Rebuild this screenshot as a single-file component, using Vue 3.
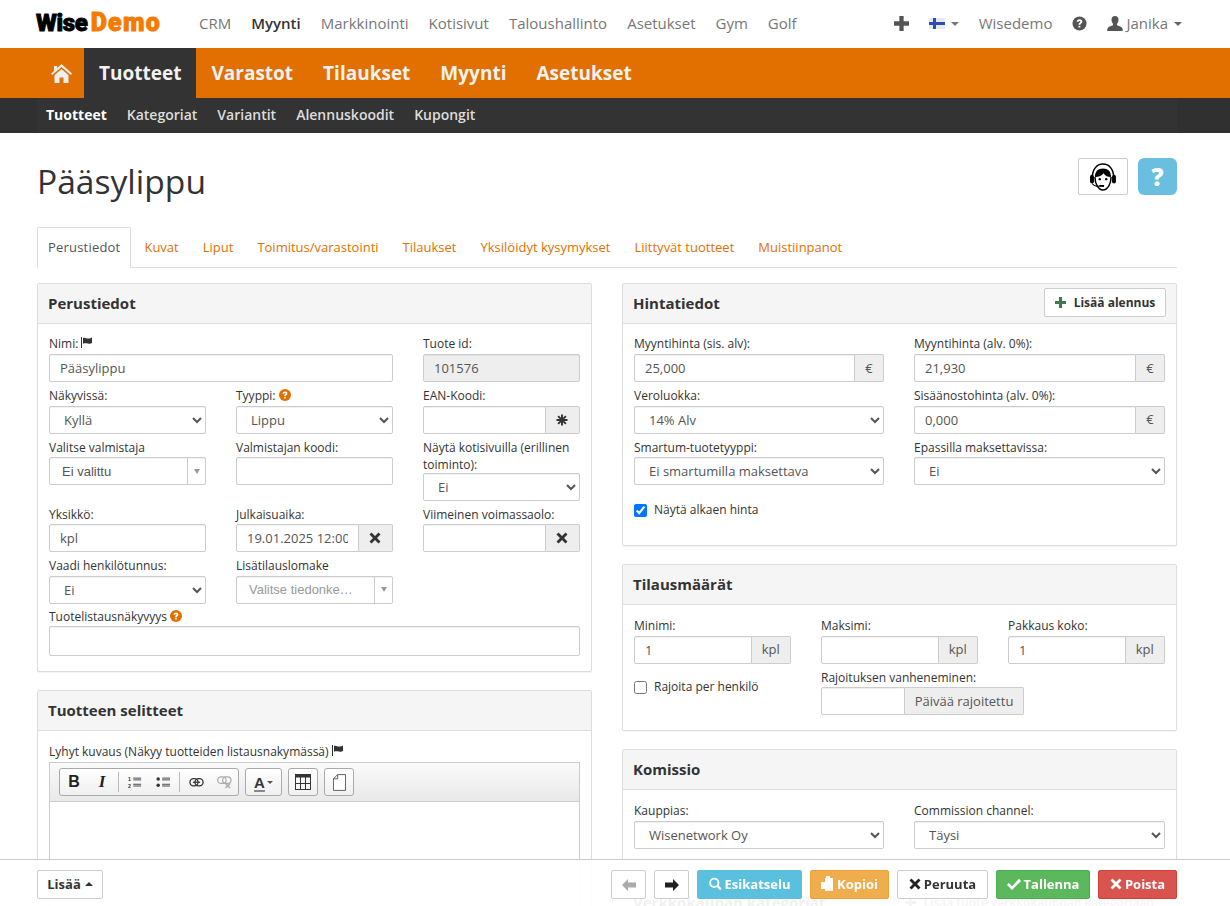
<script setup>
const topLinks = ['CRM', 'Myynti', 'Markkinointi', 'Kotisivut', 'Taloushallinto', 'Asetukset', 'Gym', 'Golf']
const mainLinks = ['Varastot', 'Tilaukset', 'Myynti', 'Asetukset']
const subLinks = ['Tuotteet', 'Kategoriat', 'Variantit', 'Alennuskoodit', 'Kupongit']
const tabs = ['Perustiedot', 'Kuvat', 'Liput', 'Toimitus/varastointi', 'Tilaukset', 'Yksilöidyt kysymykset', 'Liittyvät tuotteet', 'Muistiinpanot']
</script>

<template>
  <div class="page">
    <header class="topbar">
      <div class="logo"><span class="logo-a">Wise</span><span class="logo-b">Demo</span></div>
      <nav class="toplinks">
        <a v-for="l in topLinks" :key="l" :class="{ on: l === 'Myynti' }">{{ l }}</a>
      </nav>
      <div class="topright">
        <svg class="tplus" viewBox="0 0 14 14"><path d="M5 0h4v5h5v4H9v5H5V9H0V5h5z" fill="#555"/></svg>
        <span class="flagwrap">
          <svg class="flag" viewBox="0 0 16 11"><rect width="16" height="11" fill="#e6e9f4"/><rect x="4" width="3" height="11" fill="#2a4fae"/><rect y="4" width="16" height="3" fill="#2a4fae"/></svg>
          <i class="caret gray"></i>
        </span>
        <span class="wisedemo">Wisedemo</span>
        <svg class="tq" viewBox="0 0 16 16"><circle cx="8" cy="8" r="7.5" fill="#555"/><path d="M5 6.200C5 4.400 6.300 3.400 8.100 3.400c1.800 0 3 1 3 2.500 0 1.200-.7 1.800-1.500 2.300-.6.400-.7.600-.7 1.200H6.900c0-1.200.3-1.800 1.100-2.300.6-.4.9-.6.9-1.100 0-.5-.4-.8-.9-.8-.6 0-1 .4-1 1zM6.900 10.300h2v2h-2z" fill="#fff"/></svg>
        <span class="user">
          <svg class="tuser" viewBox="0 0 16 16"><path d="M8 0c2.300 0 3.500 1.700 3.500 3.800 0 1.500-.6 3-1.500 4v1.400c1.700.7 5 1.500 5.500 3.300.2.800.3 2 .3 2.500H.2c0-.5.1-1.700.3-2.500C1 10.700 4.300 9.900 6 9.200V7.800c-.9-1-1.500-2.500-1.500-4C4.500 1.700 5.700 0 8 0z" fill="#555"/></svg>
          <span>Janika</span>
          <i class="caret"></i>
        </span>
      </div>
    </header>

    <div class="mainbar">
      <a class="home">
        <svg viewBox="0 0 21 19"><path d="M10.500 0 21 9.600 19.800 11 10.500 3 1.200 11 0 9.600 3 6.900V2h3v2.200zM3.500 11.200 10.500 5l7 6.200V19H12.500v-5.500h-4V19h-5z" fill="#eee"/></svg>
      </a>
      <a class="active">Tuotteet</a>
      <a v-for="l in mainLinks" :key="l">{{ l }}</a>
    </div>
    <div class="subbar">
      <div class="subinner">
        <a v-for="(l, i) in subLinks" :key="l" :class="{ on: i === 0 }">{{ l }}</a>
      </div>
    </div>

    <main class="content">
      <div class="titlerow">
        <h1>Pääsylippu</h1>
        <div class="helpers">
          <button class="hbtn">
            <svg viewBox="2 2 26 26" width="28" height="28">
              <path d="M5 16C5 8 9 3 15 3s10 5 10 13" fill="none" stroke="#000" stroke-width="1.400"/>
              <rect x="3" y="13" width="3.600" height="8" rx="1.800" fill="#000"/>
              <rect x="23.400" y="13" width="3.600" height="8" rx="1.800" fill="#000"/>
              <path d="M7.500 15c0-5.500 3-8 7.500-8s7.500 2.500 7.500 8c-3 0-5.500-1-7-3.500-1.200 2-4 3.500-8 3.500z" fill="#000"/>
              <path d="M7.500 15c0 6.500 3.300 12 7.500 12s7.500-5.500 7.500-12" fill="none" stroke="#000" stroke-width="1.400"/>
              <circle cx="12" cy="17" r="1.100" fill="#000"/><circle cx="18" cy="17" r="1.100" fill="#000"/>
              <path d="M5 21c1 1.800 3.500 2.600 6.500 2.600" fill="none" stroke="#000" stroke-width="1"/>
              <path d="M11.500 22.400h4.500v1.800h-4.500z" fill="#000"/>
            </svg>
          </button>
          <button class="qbtn">?</button>
        </div>
      </div>

      <ul class="tabs">
        <li v-for="(t, i) in tabs" :key="t" :class="{ on: i === 0 }">{{ t }}</li>
      </ul>

      <div class="columns">
        <div class="col">
          <section class="panel">
            <h2 class="phead">Perustiedot</h2>
            <div class="pbody first">
              <div class="g3">
                <div class="f span2">
                  <label>Nimi: <svg class="flagi" viewBox="0 0 12 11"><path d="M0 0h1v11H0zM2 1c2-1 3 .5 5 .5S10 1 11 .5V6c-1 .8-2.500 1-4 .6S3.500 6 2 6.800z" fill="#333"/></svg></label>
                  <input value="Pääsylippu" />
                </div>
                <div class="f">
                  <label>Tuote id:</label>
                  <input value="101576" disabled class="dis" />
                </div>
                <div class="f">
                  <label>Näkyvissä:</label>
                  <select><option>Kyllä</option></select>
                </div>
                <div class="f">
                  <label>Tyyppi: <svg class="qi" viewBox="0 0 16 16"><circle cx="8" cy="8" r="8" fill="#e17000"/><path d="M4.800 6.200C4.800 4.300 6.200 3.300 8.100 3.300c1.900 0 3.100 1 3.100 2.600 0 1.200-.7 1.800-1.500 2.300-.6.400-.7.600-.7 1.200H6.900c0-1.200.3-1.800 1.100-2.300.6-.4.9-.6.9-1.100 0-.5-.4-.8-.9-.8-.6 0-1 .4-1 1zM6.900 10.300h2.100v2.200H6.900z" fill="#fff"/></svg></label>
                  <select><option>Lippu</option></select>
                </div>
                <div class="f">
                  <label>EAN-Koodi:</label>
                  <div class="ig"><input /><span class="addon w35"><svg class="ast" viewBox="0 0 12 12"><path d="M6 .5v11M.5 6h11M2.100 2.100l7.800 7.800M9.900 2.100l-7.800 7.800" stroke="#333" stroke-width="1.900"/></svg></span></div>
                </div>
                <div class="f">
                  <label>Valitse valmistaja</label>
                  <div class="combo"><span class="ctext">Ei valittu</span><span class="cbtn"><i></i></span></div>
                </div>
                <div class="f">
                  <label>Valmistajan koodi:</label>
                  <input />
                </div>
                <div class="f">
                  <label class="two">Näytä kotisivuilla (erillinen toiminto):</label>
                  <select><option>Ei</option></select>
                </div>
                <div class="f">
                  <label>Yksikkö:</label>
                  <input value="kpl" />
                </div>
                <div class="f">
                  <label>Julkaisuaika:</label>
                  <div class="ig"><input value="19.01.2025 12:00" /><span class="addon w35"><svg class="xi" viewBox="0 0 12 12"><path d="M2.500.5 6 4 9.500.5l2 2L8 6l3.500 3.500-2 2L6 8l-3.500 3.500-2-2L4 6 .5 2.500z" fill="#333"/></svg></span></div>
                </div>
                <div class="f">
                  <label>Viimeinen voimassaolo:</label>
                  <div class="ig"><input /><span class="addon w35"><svg class="xi" viewBox="0 0 12 12"><path d="M2.500.5 6 4 9.500.5l2 2L8 6l3.500 3.500-2 2L6 8l-3.500 3.500-2-2L4 6 .5 2.500z" fill="#333"/></svg></span></div>
                </div>
                <div class="f">
                  <label>Vaadi henkilötunnus:</label>
                  <select><option>Ei</option></select>
                </div>
                <div class="f">
                  <label>Lisätilauslomake</label>
                  <div class="combo muted"><span class="ctext">Valitse tiedonke…</span><span class="cbtn"><i></i></span></div>
                </div>
              </div>
              <div class="f last">
                <label>Tuotelistausnäkyvyys <svg class="qi" viewBox="0 0 16 16"><circle cx="8" cy="8" r="8" fill="#e17000"/><path d="M4.800 6.200C4.800 4.300 6.200 3.300 8.100 3.300c1.900 0 3.100 1 3.100 2.600 0 1.200-.7 1.800-1.500 2.300-.6.400-.7.600-.7 1.200H6.900c0-1.200.3-1.800 1.100-2.300.6-.4.9-.6.9-1.100 0-.5-.4-.8-.9-.8-.6 0-1 .4-1 1zM6.900 10.300h2.100v2.200H6.900z" fill="#fff"/></svg></label>
                <div class="area"></div>
              </div>
            </div>
          </section>

          <section class="panel">
            <h2 class="phead">Tuotteen selitteet</h2>
            <div class="pbody">
              <label class="lbl">Lyhyt kuvaus (Näkyy tuotteiden listausnakymässä) <svg class="flagi" viewBox="0 0 12 11"><path d="M0 0h1v11H0zM2 1c2-1 3 .5 5 .5S10 1 11 .5V6c-1 .8-2.500 1-4 .6S3.500 6 2 6.800z" fill="#333"/></svg></label>
              <div class="editor">
                <div class="toolbar">
                  <div class="tg g1">
                    <span class="tb b">B</span><span class="tb it">I</span><span class="sep"></span>
                    <span class="tb"><svg viewBox="0 0 16 14" width="14" height="13"><path d="M6 2h9M6 11h9M6 4h9M6 9h9" stroke="#333" stroke-width="1"/><text x="0" y="5.500" font-size="6" font-weight="700" fill="#333" font-family="Liberation Sans">1</text><text x="0" y="13" font-size="6" font-weight="700" fill="#333" font-family="Liberation Sans">2</text></svg></span>
                    <span class="tb"><svg viewBox="0 0 16 14" width="14" height="13"><circle cx="2.500" cy="3" r="2" fill="#333"/><circle cx="2.500" cy="10" r="2" fill="#333"/><path d="M7 2h9M7 4h9M7 9h9M7 11h9" stroke="#333"/></svg></span>
                    <span class="sep"></span>
                    <span class="tb"><svg viewBox="0 0 16 10" width="15" height="9"><rect x=".7" y=".7" width="9" height="8" rx="4" fill="none" stroke="#333" stroke-width="1.400"/><rect x="6.300" y=".7" width="9" height="8" rx="4" fill="none" stroke="#333" stroke-width="1.400"/><path d="M4 4.700h8" stroke="#333" stroke-width="1.400"/></svg></span>
                    <span class="tb"><svg viewBox="0 0 16 14" width="15" height="13"><rect x=".7" y="1" width="9" height="7" rx="3.500" fill="none" stroke="#aaa" stroke-width="1.300"/><rect x="6" y="1" width="9" height="7" rx="3.500" fill="none" stroke="#aaa" stroke-width="1.300"/><path d="M9 8l5 5M14 8l-5 5" stroke="#aaa" stroke-width="1.500"/></svg></span>
                  </div>
                  <div class="tg g2"><span class="letter">A</span><i class="caret small"></i></div>
                  <div class="tg g3b"><svg viewBox="0 0 16 16" width="16" height="16"><rect x=".5" y=".5" width="15" height="15" fill="none" stroke="#333"/><rect width="16" height="3.500" fill="#333"/><path d="M5.500 3v13M10.500 3v13M0 9.500h16" stroke="#333"/></svg></div>
                  <div class="tg g3b"><svg viewBox="0 0 14 18" width="13" height="17"><path d="M5 .5h8.500v17H.5V5z" fill="#fff" stroke="#555"/><path d="M5 .5V5H.5" fill="none" stroke="#555"/></svg></div>
                </div>
                <div class="edit-area"></div>
              </div>
            </div>
          </section>
        </div>

        <div class="col">
          <section class="panel">
            <div class="phead flexhead">
              <h2>Hintatiedot</h2>
              <button class="addbtn"><svg viewBox="0 0 12 12" width="11" height="11"><path d="M4.300 0h3.400v4.300H12v3.400H7.700V12H4.300V7.700H0V4.300h4.300z" fill="#3f7a4a"/></svg>Lisää alennus</button>
            </div>
            <div class="pbody first nopad">
              <div class="g2col">
                <div class="f"><label>Myyntihinta (sis. alv):</label><div class="ig"><input value="25,000" /><span class="addon w29">€</span></div></div>
                <div class="f"><label>Myyntihinta (alv. 0%):</label><div class="ig"><input value="21,930" /><span class="addon w29">€</span></div></div>
                <div class="f"><label>Veroluokka:</label><select><option>14% Alv</option></select></div>
                <div class="f"><label>Sisäänostohinta (alv. 0%):</label><div class="ig"><input value="0,000" /><span class="addon w29">€</span></div></div>
                <div class="f"><label>Smartum-tuotetyyppi:</label><select><option>Ei smartumilla maksettava</option></select></div>
                <div class="f"><label>Epassilla maksettavissa:</label><select><option>Ei</option></select></div>
              </div>
              <label class="check c1"><input type="checkbox" checked /><span>Näytä alkaen hinta</span></label>
            </div>
          </section>

          <section class="panel">
            <h2 class="phead">Tilausmäärät</h2>
            <div class="pbody h2body">
              <div class="g3">
                <div class="f"><label>Minimi:</label><div class="ig"><input value="1" /><span class="addon w39">kpl</span></div></div>
                <div class="f"><label>Maksimi:</label><div class="ig"><input /><span class="addon w39">kpl</span></div></div>
                <div class="f"><label>Pakkaus koko:</label><div class="ig"><input value="1" /><span class="addon w39">kpl</span></div></div>
                <label class="check c2"><input type="checkbox" /><span>Rajoita per henkilö</span></label>
                <div class="f wide">
                  <label>Rajoituksen vanheneminen:</label>
                  <div class="ig shortig"><input /><span class="addon rajoitettu">Päivää rajoitettu</span></div>
                </div>
              </div>
            </div>
          </section>

          <section class="panel">
            <h2 class="phead">Komissio</h2>
            <div class="pbody kbody">
              <div class="g2col">
                <div class="f"><label>Kauppias:</label><select><option>Wisenetwork Oy</option></select></div>
                <div class="f"><label>Commission channel:</label><select><option>Täysi</option></select></div>
              </div>
            </div>
          </section>

          <section class="panel cats">
            <div class="phead flexhead nob">
              <h2>Verkkokaupan kategoriat</h2>
              <span class="catadd"><svg viewBox="0 0 12 12" width="11" height="11"><path d="M4.300 0h3.400v4.300H12v3.400H7.700V12H4.300V7.700H0V4.300h4.300z" fill="#3f7a4a"/></svg>Lisää tuote verkkokauppan kategoriaan</span>
            </div>
          </section>
        </div>
      </div>
    </main>

    <footer class="footer">
      <button class="fb lisaa">Lisää <i class="caret up"></i></button>
      <div class="factions">
        <button class="fb ar dim"><svg viewBox="0 0 14 12" width="14" height="12"><path d="M6 0v3.500h8v5H6V12L0 6z" fill="#aaa"/></svg></button>
        <button class="fb ar"><svg viewBox="0 0 14 12" width="14" height="12"><path d="M8 0v3.500H0v5h8V12l6-6z" fill="#222"/></svg></button>
        <button class="fb info"><svg viewBox="0 0 14 14" width="13" height="14"><circle cx="5.700" cy="5.700" r="4.500" fill="none" stroke="#fff" stroke-width="2"/><path d="M8.800 8.800l4 4" stroke="#fff" stroke-width="2.500"/></svg>Esikatselu</button>
        <button class="fb warn"><svg viewBox="0 0 13 15" width="13" height="15"><path d="M5 0h4v2h3v13H4v-2H0V6h4V2h1z" fill="#fff"/></svg>Kopioi</button>
        <button class="fb"><svg viewBox="0 0 12 12" width="12" height="12"><path d="M2.500.5 6 4 9.500.5l2 2L8 6l3.500 3.500-2 2L6 8l-3.500 3.500-2-2L4 6 .5 2.500z" fill="#222"/></svg>Peruuta</button>
        <button class="fb ok"><svg viewBox="0 0 14 12" width="14" height="12"><path d="M1.800 5 5 8.200 12 .8 14 3 5 12 0 7z" fill="#fff"/></svg>Tallenna</button>
        <button class="fb danger"><svg viewBox="0 0 12 12" width="12" height="12"><path d="M2.500.5 6 4 9.500.5l2 2L8 6l3.500 3.500-2 2L6 8l-3.500 3.500-2-2L4 6 .5 2.500z" fill="#fff"/></svg>Poista</button>
      </div>
    </footer>
  </div>
</template>

<style>
html, body { margin: 0; overflow: hidden; }
</style>

<style scoped>
* { box-sizing: border-box; }
.page {
  height: 906px;
  overflow: hidden;
  position: relative;
  background: #fff;
  font-family: "Open Sans", sans-serif;
  font-size: 13px;
  line-height: 18.57px;
  color: #333;
}
.topbar { height: 48px; display: flex; align-items: center; padding: 0 48px 0 36px; }
.logo { width: 122px; margin-right: 41px; margin-top: -2px; font-family: "Roboto", sans-serif; font-weight: 900; font-size: 25px; line-height: 28px; white-space: nowrap; -webkit-text-stroke: .9px currentColor; }
.logo-a { color: #000; font-size: 24px; letter-spacing: -.3px; margin-right: 3px; }
.logo-b { color: #f47a00; letter-spacing: 1.300px; }
.toplinks { display: flex; gap: 20px; font-size: 15px; color: #777; margin-top: -1px; }
.toplinks .on { color: #333; font-weight: 600; }
.topright { margin-left: auto; margin-top: -1px; display: flex; align-items: center; font-size: 15px; color: #777; }
.tplus { width: 15px; height: 15px; margin-right: 20px; }
.flagwrap { display: flex; align-items: center; margin-right: 20px; }
.flag { width: 16px; height: 11px; margin-right: 6px; }
.wisedemo { margin-right: 20px; }
.tq { width: 15px; height: 15px; margin-right: 20px; }
.user { display: flex; align-items: center; }
.tuser { width: 16px; height: 16px; margin-right: 3px; }
.user .caret { margin-left: 6px; }
.caret { display: inline-block; width: 0; height: 0; border-left: 4px solid transparent; border-right: 4px solid transparent; border-top: 4px solid #666; }
.caret.gray { border-top-color: #777; }
.caret.up { border-top: 0; border-bottom: 4px solid #333; vertical-align: 2px; margin-left: 1px; }
.caret.small { border-left-width: 3px; border-right-width: 3px; border-top-width: 3px; border-top-color: #555; margin-left: 2px; }

.mainbar { height: 50px; background: #e17000; display: flex; align-items: stretch; padding-left: 51px; color: #f1f1f1; font-size: 19px; font-weight: 700; gap: 30px; }
.mainbar a { display: flex; align-items: center; }
.home { width: 21px; margin-right: -18px; }
.home svg { width: 21px; height: 19px; }
.mainbar .active { background: #333; padding: 0 15px; margin-right: -15px; }
.subbar { height: 35px; background: #303030; padding: 0 53px 0 37px; }
.subinner { height: 35px; background: #333; display: flex; align-items: center; gap: 20px; padding-left: 9px; color: #ddd; font-size: 14px; font-weight: 600; }
.subinner .on { color: #fff; font-weight: 700; }

.content { padding: 0 53px 0 37px; }
.titlerow { height: 94px; display: flex; justify-content: space-between; padding-top: 25px; }
h1 { margin: 0; font-size: 33.600px; line-height: 46px; font-weight: 400; color: #333; }
.helpers { display: flex; gap: 10px; }
.hbtn { width: 50px; height: 37px; background: #fff; border: 1px solid #ccc; border-radius: 2px; padding: 0; display: flex; align-items: center; justify-content: center; }
.qbtn { width: 39px; height: 37px; background: #6abfe0; border: 0; border-radius: 6px; color: #fff; font: 800 24px/37px "Open Sans", sans-serif; padding: 0; }
.tabs { list-style: none; margin: 0; padding: 0; height: 41px; display: flex; border-bottom: 1px solid #ddd; }
.tabs li { height: 41px; padding: 10px 10px 0; border: 1px solid transparent; margin-right: 2px; color: #e17000; white-space: nowrap; }
.tabs .on { color: #555; background: #fff; border-color: #ddd #ddd #fff; border-radius: 2px 2px 0 0; font-weight: 500; letter-spacing: .2px; }

.columns { display: grid; grid-template-columns: 555px 555px; gap: 30px; margin-top: 15px; }
.col { display: flex; flex-direction: column; gap: 18px; }
.panel { border: 1px solid #ddd; border-radius: 2px; background: #fff; box-shadow: 0 1px 1px rgba(0,0,0,.05); flex: none; }
.phead { margin: 0; height: 40px; background: #f5f5f5; border-bottom: 1px solid #ddd; padding: 0 10px; font-size: 15px; font-weight: 700; line-height: 39px; color: #333; }
.flexhead { display: flex; justify-content: space-between; align-items: center; padding-right: 10px; }
.flexhead h2 { margin: 0; font-size: 15px; font-weight: 700; }
.pbody { padding: 12px 11px 15px; }
.first { padding-top: 11.400px; }
.nopad { padding-bottom: 0; }
.g3 { display: grid; grid-template-columns: repeat(3, 157px); column-gap: 30px; align-items: start; }
.g2col { display: grid; grid-template-columns: 250px 251px; column-gap: 30px; }
.span2 { grid-column: span 2; }
.f { margin-bottom: 5px; min-width: 0; }
.f > label, .lbl { display: block; white-space: nowrap; height: 18.57px; font-size: 12px; line-height: 18px; }
.f > label.two { white-space: normal; height: 34px; line-height: 17px; }
input:not([type=checkbox]), select, .combo, .area {
  display: block; width: 100%; height: 28px; border: 1px solid #ccc; border-radius: 2px; background: #fff; color: #555;
  font: 13px "Open Sans", sans-serif; padding: 0 10px; outline: 0; box-shadow: inset 0 1px 1px rgba(0,0,0,.06);
}
input.dis:not([type=checkbox]) { background: #eee; }
.ig { display: flex; }
.ig input { flex: 1; min-width: 0; border-radius: 2px 0 0 2px; }
.addon { flex: none; height: 28px; background: #eee; border: 1px solid #ccc; border-left: 0; border-radius: 0 2px 2px 0; display: flex; align-items: center; justify-content: center; color: #555; font-size: 13px; }
.w35 { width: 34.500px; }
.w29 { width: 29px; }
.w39 { width: 39.500px; }
.ast { width: 12px; height: 12px; }
.xi { width: 12px; height: 12px; }
.flagi { width: 12px; height: 11px; vertical-align: 0; }
.qi { width: 12px; height: 12px; vertical-align: -1px; }
.combo { display: flex; padding: 0; align-items: center; font-family: "Liberation Sans", sans-serif; font-size: 13px; }
.ctext { flex: 1; padding-left: 12px; overflow: hidden; white-space: nowrap; }
.cbtn { width: 18px; height: 26px; border-left: 1px solid #ccc; display: flex; align-items: center; justify-content: center; }
.cbtn i { width: 0; height: 0; border-left: 3px solid transparent; border-right: 3px solid transparent; border-top: 5px solid #999; }
.muted { color: #999; }
.last { margin: 0; }
.last > label { height: 17.500px; line-height: 16px; }
.area { height: 30px; }
.lbl { height: 19px; }
.editor { border: 1px solid #ccc; border-bottom: 0; height: 200px; }
.toolbar { height: 39px; background: linear-gradient(#fafafa, #e9e9e9); border-bottom: 1px solid #ccc; display: flex; padding: 5px 0 0 9px; gap: 6px; }
.tg { height: 28px; border: 1px solid #aaa; border-radius: 3px; display: flex; align-items: center; background: linear-gradient(#fff, #f0f0f0); }
.g1 { width: 180px; }
.tb { width: 28px; display: flex; align-items: center; justify-content: center; font: 700 15px "Liberation Serif", serif; color: #222; }
.b { font-family: "Liberation Sans", sans-serif; font-size: 16px; }
.it { font-style: italic; font-size: 17px; }
.sep { width: 1px; height: 20px; background: #bbb; margin: 0 2px; }
.g2 { width: 37px; justify-content: center; }
.letter { font: 700 15px "Liberation Sans", sans-serif; text-decoration: underline; text-decoration-color: #888; text-decoration-thickness: 2px; text-underline-offset: 2px; }
.g3b { width: 30px; justify-content: center; }
.addbtn { height: 29px; width: 122px; margin-top: -2px; background: #fff; border: 1px solid #ccc; border-radius: 2px; font: 700 12px "Open Sans", sans-serif; color: #333; display: flex; align-items: center; justify-content: center; gap: 8px; padding: 0; }
.check { display: flex; align-items: flex-start; font-size: 12px; line-height: 17px; }
.check input { margin: 3px 7px 0 0; width: 13px; height: 13px; flex: none; }
.c1 { margin-top: 11px; height: 44px; }
.c2 { padding-top: 9px; grid-column: 1; }
.wide { grid-column: 2 / 4; }
.shortig { width: 203px; }
.shortig input { flex: none; width: 84px; }
.rajoitettu { width: 119px; }
.h2body { padding-bottom: 10px; }
.kbody { padding-bottom: 9px; }
.cats { height: 40px; }
.nob { border-bottom: 0; }
.catadd { font-weight: 600; font-size: 12px; color: #666; display: flex; align-items: center; gap: 8px; margin-right: 12px; }

.footer { position: fixed; left: 0; right: 0; bottom: 0; height: 47px; background: rgba(255,255,255,.93); border-top: 1px solid #ccc; display: flex; justify-content: space-between; padding: 10px 53px 0 37px; }
.factions { display: flex; gap: 8px; }
.fb { height: 29px; background: #fff; border: 1px solid #ccc; border-radius: 2px; font: 700 13px "Open Sans", sans-serif; color: #333; padding: 0 9px 2px; display: flex; align-items: center; justify-content: center; gap: 3px; }
.lisaa { width: 66px; }
.ar { width: 35px; padding: 0; }
.info { background: #5bc0de; border-color: #5bc0de; color: #fff; width: 105px; }
.warn { background: #f0ad4e; border-color: #eea236; color: #fff; width: 79px; }
.fb:nth-child(5) { width: 91px; }
.ok { background: #5cb85c; border-color: #4cae4c; color: #fff; width: 94px; }
.danger { background: #d9534f; border-color: #d43f3a; color: #fff; width: 79px; }
</style>
